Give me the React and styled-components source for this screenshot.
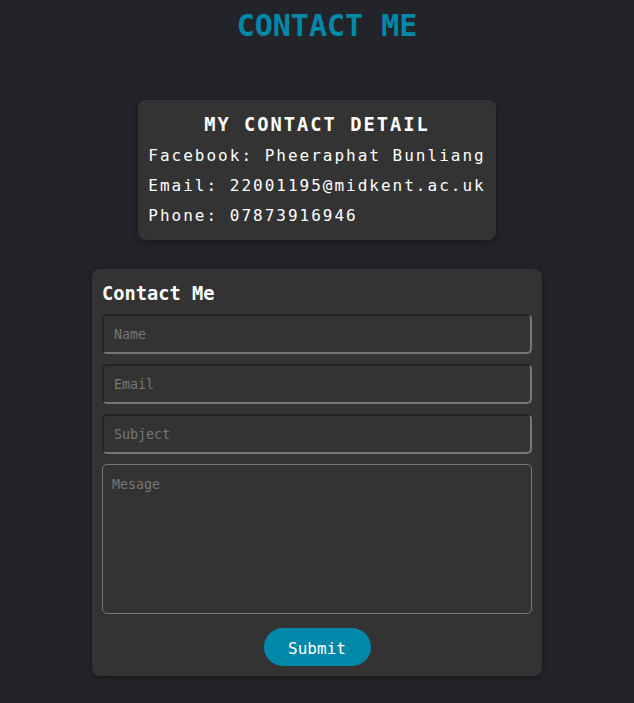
import React from "react";
import styled, { createGlobalStyle } from "styled-components";

const GlobalStyle = createGlobalStyle`
  html, body {
    margin: 0;
    padding: 0;
    background-color: #232429;
  }
  body {
    font-family: "DejaVu Sans Mono", "Liberation Mono", monospace;
    color: #fff;
  }
`

const Page = styled.div`
  display: flex;
  flex-direction: column;
  align-items: center;
  padding-bottom: 26px;
`

const Title = styled.h1`
  margin: 2px 0 50px 0;
  padding-left: 20px;
  font-size: 30px;
  line-height: 48px;
  font-weight: bold;
  color: #0088a9;
`

const Card = styled.div`
  background-color: #333333;
  border-radius: 8px;
  box-shadow: 0 2px 6px rgba(0, 0, 0, .35);
  padding: 10px;
  box-sizing: border-box;
`

const DetailCard = styled(Card)`
  width: fit-content;
  letter-spacing: 2px;
  margin-bottom: 29px;
  h3{
    margin: 0;
    text-align: center;
    font-size: 18.72px;
    line-height: 30px;
  }
  p{
    margin: 0;
    font-size: 16px;
    line-height: 30px;
    padding-top: 1px;
    margin-bottom: -1px;
  }
`

const FormCard = styled(Card)`
  width: 450px;
  display: flex;
  flex-direction: column;
  gap: 10px;
  h3{
    margin: 0 0 -5px 0;
    font-size: 18.72px;
    line-height: 30px;
  }
`

const Field = styled.input`
  height: 40px;
  box-sizing: border-box;
  background-color: #333333;
  border-width: 2px;
  border-style: solid;
  border-color: #242424 #777 #777 #242424;
  border-radius: 5px;
  padding: 0 10px;
  color: #fff;
  font-family: inherit;
  font-size: 13.33px;
  outline: none;
  &::placeholder{
    color: #777;
  }
`

const MessageBox = styled.textarea`
  height: 150px;
  box-sizing: border-box;
  background-color: #333333;
  border: 1px solid #777;
  border-radius: 5px;
  padding: 12px 9px;
  color: #fff;
  font-family: inherit;
  font-size: 13.33px;
  resize: none;
  outline: none;
  &::placeholder{
    color: #777;
  }
`

const SubmitButton = styled.button`
  align-self: center;
  margin-top: 4px;
  width: 107px;
  height: 38px;
  border: none;
  border-radius: 19px;
  background-color: #0088a9;
  color: #fff;
  font-family: inherit;
  font-size: 16px;
  padding-top: 3px;
  cursor: pointer;
`

export default function App() {
  return (
    <Page>
      <GlobalStyle />
      <Title>CONTACT ME</Title>
      <DetailCard>
        <h3>MY CONTACT DETAIL</h3>
        <p>Facebook: Pheeraphat Bunliang</p>
        <p>Email: 22001195@midkent.ac.uk</p>
        <p>Phone: 07873916946</p>
      </DetailCard>
      <FormCard as="form" onSubmit={e => e.preventDefault()}>
        <h3>Contact Me</h3>
        <Field type="text" placeholder="Name" />
        <Field type="email" placeholder="Email" />
        <Field type="text" placeholder="Subject" />
        <MessageBox placeholder="Mesage" />
        <SubmitButton type="submit">Submit</SubmitButton>
      </FormCard>
    </Page>
  )
}
